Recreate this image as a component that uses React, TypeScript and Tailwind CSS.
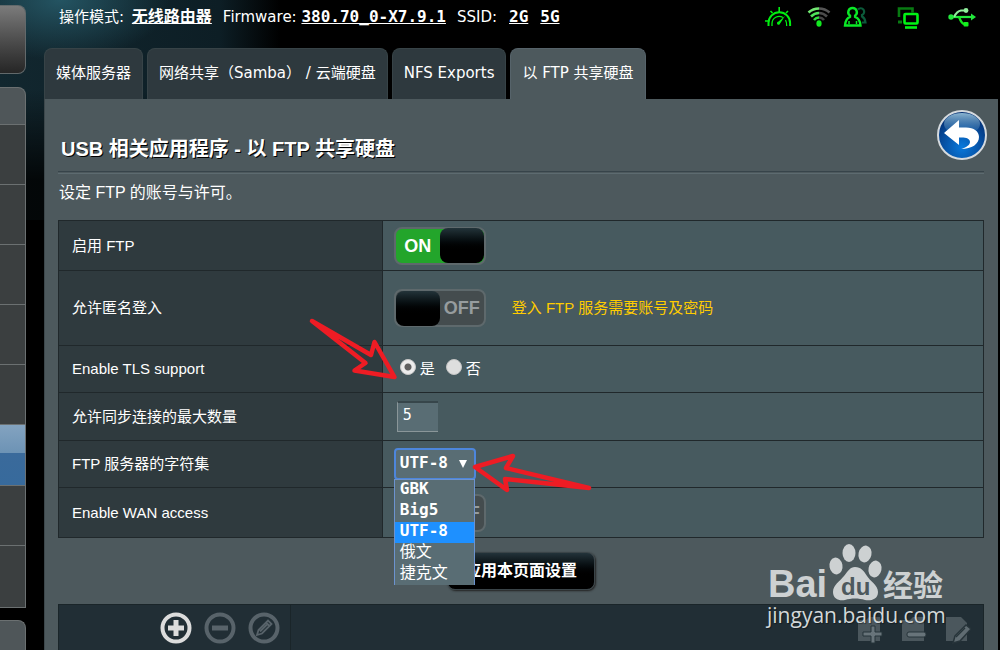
import React from "react";

const tabs = [
  { label: "媒体服务器", active: false },
  { label: "网络共享（Samba） / 云端硬盘", active: false },
  { label: "NFS Exports", active: false },
  { label: "以 FTP 共享硬盘", active: true },
];

const charsets = ["GBK", "Big5", "UTF-8", "俄文", "捷克文"];

function Sidebar() {
  const row = "h-[60px] border-t border-[#6b7071] bg-[#3b3f40]";
  return (
    <nav aria-label="侧栏" className="flex w-[26px] shrink-0 flex-col pt-[5px]">
      <div className="h-[69px] rounded-r-lg border-y border-r border-[#62696b] bg-gradient-to-b from-[#7b7b7b] to-[#262626]" />
      <div className="mt-[13px] rounded-tr-lg border border-l-0 border-[#6b7071] bg-[#4f5659]">
        <div className="h-9" />
        <div className={row} />
        <div className={row} />
        <div className={row} />
        <div className={row} />
        <div className={row} />
        <div className="h-[61px] border-t border-[#6b7071] bg-[linear-gradient(#83a3c0,#6d93b5_46%,#3a6a9b_46%,#376a9c)]" />
        <div className={row} />
        <div className="h-[62px] border-t border-[#6b7071] bg-[#3b3f40]" />
      </div>
      <div className="mt-3 grow rounded-tr-lg border border-b-0 border-l-0 border-[#6b7071] bg-[#4f5659]" />
    </nav>
  );
}

function StatusIcons() {
  return (
    <div className="flex items-center">
      <svg width="28" height="22" viewBox="0 0 28 22" fill="none" stroke="#00f010" aria-label="QoS">
        <path d="M3.500 20v-3a10.800 10.800 0 0 1 21.600 0v3" strokeWidth="2" />
        <path d="M7 20v-2.500a7.200 7.200 0 0 1 11-6M20.500 14q1.200 2 1.200 6" strokeWidth="1.300" />
        <path d="M14.200 1v5M5.500 5l2 2M23 5l-2 2M0 15h3" strokeWidth="1.600" />
        <path d="M20 10l-6.500 5.500a1.600 1.600 0 1 0 1.600 2z" fill="#00f010" stroke="none" />
      </svg>
      <svg className="ml-[14px]" width="24" height="22" viewBox="0 0 24 22" fill="none" strokeWidth="2.600" aria-label="Wi-Fi">
        <path d="M1.500 6.500q4.500-4 10.500-4" stroke="#73e873" />
        <path d="M12 2.500q6 0 10.500 4" stroke="#565656" />
        <path d="M4 10.500q3.500-3.500 8-3.500" stroke="#4fe45a" />
        <path d="M12 7q4.500 0 8 3.500" stroke="#4c4c4c" />
        <path d="M7 14q2-2.500 5-2.500" stroke="#32dd40" />
        <path d="M12 11.500q3 0 5 2.500" stroke="#444" />
        <ellipse cx="12" cy="17.500" rx="2.600" ry="3.200" fill="#12e820" />
      </svg>
      <svg className="ml-3" width="24" height="22" viewBox="0 0 24 22" fill="none" aria-label="客户端">
        <path d="M15 3.500a3.500 3.500 0 1 1 4 5.500v1.500q3 1.500 3.500 6H19" stroke="#0b5a3a" strokeWidth="2.200" />
        <path d="M9.500 2a4.200 4.200 0 0 1 2.600 7.600v1.200q5 2 5.400 8.700H2q.4-6.700 5-8.700V9.600A4.200 4.200 0 0 1 9.500 2z" stroke="#0ae826" strokeWidth="2.400" />
        <path d="M6 18v-3M13.500 18v-3" stroke="#0ae826" strokeWidth="1.500" />
      </svg>
      <svg className="ml-[30px]" width="24" height="24" viewBox="0 0 24 24" fill="none" aria-label="多屏">
        <path d="M2 12V3.500h13.500v4" stroke="#087a12" strokeWidth="2.600" />
        <path d="M1 17h4" stroke="#087a12" strokeWidth="3" />
        <rect x="7.500" y="9" width="13" height="9.500" rx="1" stroke="#00f414" strokeWidth="2.600" />
        <path d="M8 22.500h12" stroke="#00f414" strokeWidth="2.600" />
      </svg>
      <svg className="ml-[27px]" width="28" height="22" viewBox="0 0 28 22" fill="none" strokeWidth="2.200" aria-label="USB">
        <path d="M3 11h21" stroke="#22e83c" />
        <path d="M6 11Q9 5 13 4.500h4" stroke="#90ee9c" />
        <path d="M11 11q2.500 6.500 5 7h2" stroke="#14e81e" />
        <circle cx="3" cy="11" r="2.700" fill="#22e83c" />
        <circle cx="18" cy="4.500" r="2.400" fill="#90ee9c" />
        <rect x="15.500" y="16" width="5" height="4.500" rx="1" fill="#14f01e" />
        <path d="M23 7.500l5 3.500-5 3.500z" fill="#22e83c" />
      </svg>
    </div>
  );
}

function Toggle({ on, label }: { on: boolean; label: string }) {
  return (
    <button
      type="button"
      role="switch"
      aria-checked={on}
      aria-label={label}
      className={
        "flex h-[38px] w-[92px] items-center rounded-lg border-2 border-[#5e696c] text-lg font-bold " +
        (on ? "flex-row bg-[#23a52b] text-white" : "flex-row-reverse bg-[#444c4e] text-[#969c9e]")
      }
    >
      <span className="grow text-center">{on ? "ON" : "OFF"}</span>
      <span className="h-[35px] w-11 rounded-lg bg-gradient-to-b from-[#23343a] to-black to-70%" />
    </button>
  );
}

function Row({ label, htmlFor, height, children }: { label: string; htmlFor?: string; height: string; children: React.ReactNode }) {
  return (
    <tr className={height}>
      <th scope="row" className="w-[35%] border border-[#20282b] bg-[#2f3a3e] py-0 pl-[13px] text-left font-normal">
        <label htmlFor={htmlFor}>{label}</label>
      </th>
      <td className="border border-[#20282b] bg-[#475a5f] py-0 pl-[11px]">{children}</td>
    </tr>
  );
}

const radio =
  "mb-1 size-4 appearance-none rounded-full border border-[#c4c4c4] bg-[#dedede] checked:bg-[radial-gradient(circle,#606060_3px,#ececec_4px)]";

function Settings() {
  return (
    <table className="w-full table-fixed border-collapse text-[15px] leading-5">
      <tbody>
        <Row label="启用 FTP" height="h-[50px]">
          <Toggle on label="启用 FTP" />
        </Row>
        <Row label="允许匿名登入" height="h-[75px]">
          <div className="flex items-center gap-[26px]">
            <Toggle on={false} label="允许匿名登入" />
            <span className="text-[#fc0]">登入 FTP 服务需要账号及密码</span>
          </div>
        </Row>
        <Row label="Enable TLS support" height="h-[47px]">
          <div className="flex items-center pl-[6px]">
            <input id="tls-yes" type="radio" name="tls" defaultChecked className={radio} />
            <label htmlFor="tls-yes" className="ml-1">是</label>
            <input id="tls-no" type="radio" name="tls" className={radio + " ml-[11px]"} />
            <label htmlFor="tls-no" className="ml-1">否</label>
          </div>
        </Row>
        <Row label="允许同步连接的最大数量" htmlFor="max-conn" height="h-12">
          <input
            id="max-conn"
            defaultValue="5"
            className="ml-[3px] block h-[31px] w-[41px] border border-r-0 border-t-2 border-[#8a9699] border-t-[#37464b] bg-[#596d74] pb-1 pl-[5px] font-['DejaVu_Sans_Mono',monospace] text-[15px]"
          />
        </Row>
        <Row label="FTP 服务器的字符集" htmlFor="charset" height="h-[47px]">
          <div className="relative z-10 w-[82px] font-['DejaVu_Sans_Mono','Noto_Sans_CJK_SC',monospace] text-base leading-[21px]">
            <select
              id="charset"
              defaultValue="UTF-8"
              className="block h-8 w-full appearance-none rounded-sm border-2 border-[#4d86dc] bg-[#596d74] pb-1 pl-1 font-bold"
            >
              {charsets.map((c) => (
                <option key={c}>{c}</option>
              ))}
            </select>
            <svg className="pointer-events-none absolute right-[9px] top-3" width="8" height="8" viewBox="0 0 8 8" fill="#fff" aria-hidden="true">
              <path d="M0 0h8L4 8z" />
            </svg>
            <ul role="listbox" aria-label="FTP 服务器的字符集" className="absolute left-0 top-[31px] w-[81px] border-x border-t border-[#6c93cf] bg-[#596d74]">
              {charsets.map((c) => (
                <li
                  key={c}
                  role="option"
                  aria-selected={c === "UTF-8"}
                  className={
                    "h-[21px] pl-[5px] leading-[18px] " + (c === "UTF-8" ? "bg-[#1e90ff] font-bold" : /[A-Z]/.test(c) ? "font-bold" : "")
                  }
                >
                  {c}
                </li>
              ))}
            </ul>
          </div>
        </Row>
        <Row label="Enable WAN access" height="h-[50px]">
          <Toggle on={false} label="Enable WAN access" />
        </Row>
      </tbody>
    </table>
  );
}

function BackButton() {
  return (
    <button type="button" aria-label="返回" className="size-[50px]">
      <svg width="50" height="50" viewBox="0 0 50 50">
        <defs>
          <radialGradient id="orb" cx=".5" cy=".75" r=".7">
            <stop offset="0" stopColor="#0879dc" />
            <stop offset=".45" stopColor="#0758ae" />
            <stop offset="1" stopColor="#042f73" />
          </radialGradient>
          <linearGradient id="gloss" x2="0" y2="1">
            <stop offset="0" stopColor="#8ab4d0" />
            <stop offset="1" stopColor="#3a78b0" stopOpacity=".2" />
          </linearGradient>
        </defs>
        <circle cx="25" cy="25" r="24" fill="url(#orb)" stroke="#d5dade" strokeWidth="2" />
        <ellipse cx="25" cy="14" rx="18" ry="11" fill="url(#gloss)" />
        <path d="M7 23L22 10v7.500h7c8 0 13 4 13 9.500 0 7-7 12-18 12 5-1.500 9-4 9-7 0-4-5-5-11-4.500V35z" fill="#fff" />
      </svg>
    </button>
  );
}

function Toolbar() {
  return (
    <div className="flex grow border border-b-0 border-[#1a2529] bg-[#212e35]">
      <div className="flex w-[232px] items-start justify-end gap-[10px] border-r border-[#1a2529] pr-[9px] pt-[6px]">
        <button type="button" aria-label="添加">
          <svg width="34" height="34" viewBox="0 0 34 34" fill="none" stroke="#dcdcdc">
            <circle cx="17" cy="17" r="13.500" strokeWidth="4" />
            <path d="M17 9v16M9 17h16" strokeWidth="5" />
          </svg>
        </button>
        <button type="button" aria-label="删除">
          <svg width="34" height="34" viewBox="0 0 34 34" fill="none" stroke="#58636a">
            <circle cx="17" cy="17" r="13.500" strokeWidth="4" />
            <path d="M9 17h16" strokeWidth="5" />
          </svg>
        </button>
        <button type="button" aria-label="编辑">
          <svg width="34" height="34" viewBox="0 0 34 34" fill="none" stroke="#58636a">
            <circle cx="17" cy="17" r="13.500" strokeWidth="4" />
            <path d="M10 24l1.500-5L21 9.500l3.500 3.500L15 22.500zM19 11.500l3.500 3.500M13 20.500l7-7" strokeWidth="1.800" />
          </svg>
        </button>
      </div>
      <div className="flex grow items-start justify-end gap-[18px] pr-3 pt-[11px]">
        <button type="button" aria-label="新建文件夹">
          <svg width="26" height="28" viewBox="0 0 26 28">
            <path d="M1 4h8l3-3h11v24H1z" fill="#4b575d" />
            <path d="M14 10h4v6h7v4h-7v7h-4v-7H6v-4h8z" fill="#68747a" stroke="#27343a" />
          </svg>
        </button>
        <button type="button" aria-label="删除文件夹">
          <svg width="26" height="28" viewBox="0 0 26 28">
            <path d="M1 4h8l3-3h11v24H1z" fill="#4b575d" />
            <rect x="6" y="16" width="19" height="5" rx="2" fill="#68747a" stroke="#27343a" />
          </svg>
        </button>
        <button type="button" aria-label="重命名文件夹">
          <svg width="26" height="28" viewBox="0 0 26 28">
            <path d="M1 1h15l6 6v18H1z" fill="#4b575d" />
            <path d="M8 27l2-7L21 9l5 4-11 12z" fill="#606c72" stroke="#27343a" strokeWidth="1.500" />
            <path d="M11 21l9-9" stroke="#27343a" strokeWidth="1.200" />
          </svg>
        </button>
      </div>
    </div>
  );
}

function Watermark() {
  return (
    <div className="pointer-events-none absolute right-[53px] top-[543px] z-20 w-[180px] text-[#d3d8d9]">
      <svg className="-mb-3" width="180" height="72" viewBox="0 0 180 72" fill="#cdd1d2">
        <text x="1" y="54" fontSize="38" fontWeight="700" fontFamily="Liberation Sans, sans-serif">Bai</text>
        <ellipse cx="69" cy="23" rx="6.500" ry="8.500" transform="rotate(-10 69 23)" />
        <ellipse cx="82" cy="10" rx="6.500" ry="9" />
        <ellipse cx="98" cy="11" rx="6.500" ry="8.500" transform="rotate(12 98 11)" />
        <ellipse cx="108" cy="26" rx="6.500" ry="8.500" transform="rotate(12 108 26)" />
        <path d="M88 24c6 0 9 4 12 9s11 9 11 16c0 8-8 9-13 8-6-2-14-2-20 0-6 1-12-1-12-8 0-7 7-11 11-16s6-9 11-9z" />
        <text x="74" y="52" fontSize="24" fontWeight="700" fontFamily="Liberation Sans, sans-serif" fill="#4d595d">du</text>
        <text x="116" y="53" fontSize="30" fontWeight="700" fontFamily="Noto Sans CJK SC, sans-serif">经验</text>
      </svg>
      <div className="font-['Open_Sans','Noto_Sans',sans-serif] text-[21px] leading-6 font-medium [text-shadow:1px_1px_1px_#0006]">jingyan.baidu.com</div>
    </div>
  );
}

export default function App() {
  return (
    <div className="relative flex h-screen overflow-hidden bg-black bg-[linear-gradient(#0000_90px,#000000d0_180px),radial-gradient(ellipse_110px_60px_at_60px_0px,#245462,#0000),linear-gradient(90deg,#12272f_0,#0d1e25_220px,#000_280px)] bg-[length:100%_220px] bg-no-repeat font-['Liberation_Sans','Noto_Sans_CJK_SC',sans-serif] text-white">
      <Sidebar />
      <div className="ml-[18px] mr-0.5 flex min-w-0 grow flex-col">
        <header className="flex h-12 items-start justify-between pl-[15px] pr-[22px] pt-[5px] font-['DejaVu_Sans','Noto_Sans_CJK_SC',sans-serif] text-[15px] leading-6">
          <div className="flex gap-[11px] whitespace-nowrap">
            <span>
              操作模式:{" "}
              <a href="#mode" className="ml-[3px] text-base font-bold underline">无线路由器</a>
            </span>
            <span>
              Firmware:{" "}
              <a href="#firmware" className="font-['DejaVu_Sans_Mono',monospace] text-base font-bold underline">380.70_0-X7.9.1</a>
            </span>
            <span className="flex gap-3 font-['DejaVu_Sans_Mono',monospace] text-base font-bold leading-6">
              <span className="font-['DejaVu_Sans',sans-serif] text-[15px] font-normal">SSID:</span>
              <a href="#ssid-2g" className="underline">2G</a>
              <a href="#ssid-5g" className="underline">5G</a>
            </span>
          </div>
          <StatusIcons />
        </header>
        <nav className="flex gap-1 font-['DejaVu_Sans','Noto_Sans_CJK_SC',sans-serif] text-[15px]">
          {tabs.map((t) => (
            <a
              key={t.label}
              href="#tab"
              aria-current={t.active ? "page" : undefined}
              className={
                "flex h-[51px] items-center whitespace-nowrap rounded-t-lg border border-b-0 px-[11px] pb-px " +
                (t.active ? "border-[#56636a] bg-[#4d595d]" : "border-[#374347] bg-[#2e393e]")
              }
            >
              {t.label}
            </a>
          ))}
        </nav>
        <main className="flex min-h-0 grow flex-col border-l border-[#3d484c] bg-[#4d595d] pl-[13px] pr-[14px] pt-[11px]">
          <div className="-mr-[3px] flex items-start justify-between pl-[3px]">
            <h1 className="mt-[25px] text-xl leading-7 font-bold [text-shadow:1px_1px_0_#000]">USB 相关应用程序 - 以 FTP 共享硬盘</h1>
            <BackButton />
          </div>
          <div className="mt-2 h-[3px] shrink-0 border-y border-b-[#5d6b70] border-t-[#37444a]" />
          <p className="mt-[7px] mb-[15px] pl-px text-base leading-6">设定 FTP 的账号与许可。</p>
          <Settings />
          <div className="flex shrink-0 justify-center pb-[14px] pt-[14px]">
            <button type="button" className="h-[38px] rounded-lg border border-[#3a4448] bg-gradient-to-b from-[#23333a] to-black to-70% px-[17px] text-base font-bold shadow-[1px_1px_2px_#222]">
              应用本页面设置
            </button>
          </div>
          <Toolbar />
        </main>
      </div>
      <svg className="pointer-events-none absolute left-[300px] top-[310px] z-20" width="300" height="190" viewBox="0 0 300 190" fill="none" stroke="#ee1c24" strokeWidth="4.500" strokeLinejoin="round" aria-hidden="true">
        <path d="M12 11L71 45l3.500-13 20 35-40-6.500 11-7.500z" />
        <path d="M175 157l38-11-7 12L289 178l-84-9 2 11z" />
      </svg>
      <Watermark />
    </div>
  );
}
